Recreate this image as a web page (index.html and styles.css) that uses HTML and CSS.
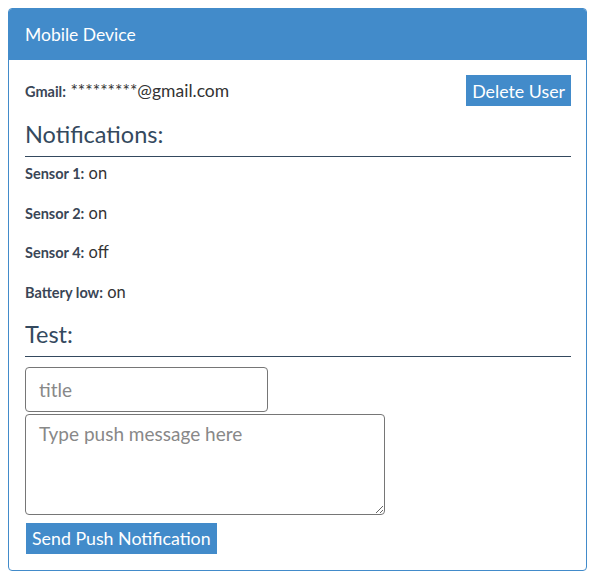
FILE: index.html
```html
<!DOCTYPE html>
<html lang="en">
<head>
    <meta charset="UTF-8">
    <meta name="viewport" content="width=device-width, initial-scale=1.0">
    <title>Mobile Device</title>
    <link rel="stylesheet" href="styles.css">
</head>
<body>
    <div class="panel">
        <div class="panel-heading">Mobile Device</div>
        <div class="panel-body">
            <div class="user-row">
                <p><b>Gmail:</b> *********@gmail.com</p>
                <button class="btn">Delete User</button>
            </div>

            <h3>Notifications:</h3>
            <div class="settings">
                <p class="setting"><b>Sensor 1:</b> on</p>
                <p class="setting"><b>Sensor 2:</b> on</p>
                <p class="setting"><b>Sensor 4:</b> off</p>
                <p class="setting"><b>Battery low:</b> on</p>
            </div>

            <h3 class="test-title">Test:</h3>
            <input class="title-input" type="text" placeholder="title">
            <textarea class="message" placeholder="Type push message here"></textarea>
            <button class="btn send">Send Push Notification</button>
        </div>
    </div>
</body>
</html>
```

FILE: styles.css
```css
body {
    font-family: Lato, "Open Sans", sans-serif;
    margin: 8px;
    color: #333;
}

.panel {
    border: 1px solid #428bca;
    border-radius: 4px;
    width: 577px;
}

.panel-heading {
    background-color: #428bca;
    color: #fff;
    font-size: 17.5px;
    height: 51px;
    line-height: 51px;
    padding: 0 16px;
    border-radius: 3px 3px 0 0;
}

.panel-body {
    padding: 15px 15px 16px 16px;
}

.user-row {
    display: flex;
    justify-content: space-between;
    align-items: center;
}

.user-row p {
    margin: 0;
    font-size: 17.5px;
}

b {
    font-size: 14.5px;
    color: #3a4656;
}

.btn {
    background-color: #428bca;
    color: #fff;
    border: none;
    font-family: Lato, "Open Sans", sans-serif;
    font-size: 17.8px;
    padding: 0 6px;
    height: 31px;
    cursor: pointer;
}

h3 {
    font-size: 23.5px;
    font-weight: normal;
    color: #34495e;
    margin: 14px 0 0;
    padding-bottom: 8px;
    border-bottom: 1px solid #34495e;
}

.setting {
    font-size: 16.5px;
    margin: 0;
    height: 39.7px;
    line-height: 32px;
}

.test-title {
    margin-top: 4px;
}

.title-input,
.message {
    display: block;
    font-family: Lato, "Open Sans", sans-serif;
    font-size: 19px;
    color: #333;
    border: 1px solid #767676;
    border-radius: 4px;
    padding: 10px 13px;
    box-sizing: border-box;
}

.title-input {
    width: 243px;
    height: 45px;
    margin-top: 10px;
}

.message {
    width: 360px;
    height: 101px;
    margin-top: 2px;
    padding-top: 7px;
}

.title-input::placeholder,
.message::placeholder {
    color: #888;
}

.send {
    margin: 8px 0 0 1px;
    height: 31px;
}
```
